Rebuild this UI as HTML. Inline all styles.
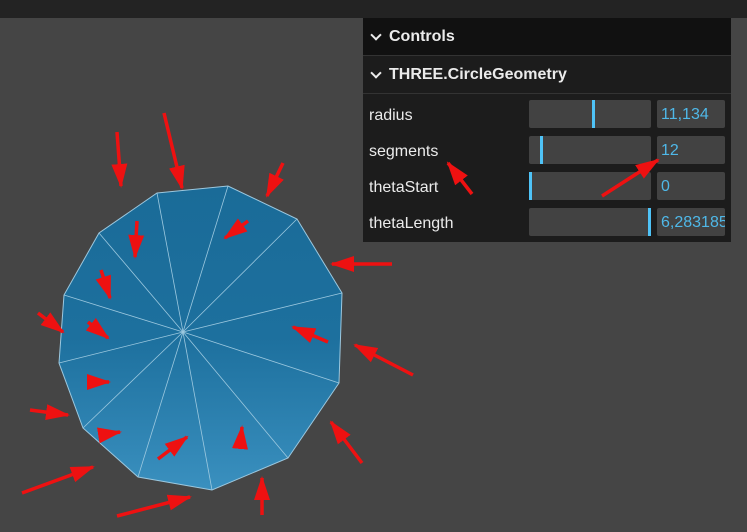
<!DOCTYPE html>
<html><head><style>
body{margin:0;width:747px;height:532px;background:#454545;overflow:hidden;font-family:"Liberation Sans",sans-serif;position:relative}
.top{position:absolute;left:0;top:0;width:747px;height:18px;background:#232323}
.panel{position:absolute;left:363px;top:18px;width:368px;height:224px;background:#1c1c1c;color:#ebebeb;font-size:16px}
.h{height:37px;line-height:38px;font-weight:bold;padding-left:26px;position:relative;border-bottom:1px solid #333;font-size:16px}
.h:before{content:"";position:absolute;left:9px;top:13px;width:6px;height:6px;border-right:2px solid #ebebeb;border-bottom:2px solid #ebebeb;transform:rotate(45deg)}
.row{position:absolute;left:0;height:28px;width:368px}
.row .l{position:absolute;left:6px;top:2px;line-height:28px}
.row .s{position:absolute;left:166px;top:0;width:122px;height:28px;background:#424242;border-radius:2px}
.row .s i{position:absolute;top:0;width:3px;height:28px;background:#4fc3f7}
.row .v{position:absolute;left:294px;top:0;width:68px;height:28px;background:#424242;border-radius:2px;color:#4fb8e8;line-height:30px;padding-left:4px;box-sizing:border-box;overflow:hidden;white-space:nowrap}
</style></head><body>
<div class="top"></div>
<svg style="position:absolute;left:0;top:0" width="747" height="532">
<defs>
<linearGradient id="g" x1="0" y1="0" x2="0" y2="1"><stop offset="0" stop-color="#1a6b98"/><stop offset="0.5" stop-color="#1d709e"/><stop offset="1" stop-color="#3a90bf"/></linearGradient>
</defs>
<polygon points="157,193 228,186 297,219 342,293 339,383 288,458 212,490 138,477 83,428 59,363 64,295 99,233" fill="url(#g)" stroke="#9cc8df" stroke-width="1"/>
<g stroke="#9cc8df" stroke-width="0.8">
<line x1="183" y1="332" x2="157" y2="193"/><line x1="183" y1="332" x2="228" y2="186"/><line x1="183" y1="332" x2="297" y2="219"/><line x1="183" y1="332" x2="342" y2="293"/><line x1="183" y1="332" x2="339" y2="383"/><line x1="183" y1="332" x2="288" y2="458"/><line x1="183" y1="332" x2="212" y2="490"/><line x1="183" y1="332" x2="138" y2="477"/><line x1="183" y1="332" x2="83" y2="428"/><line x1="183" y1="332" x2="59" y2="363"/><line x1="183" y1="332" x2="64" y2="295"/><line x1="183" y1="332" x2="99" y2="233"/>
</g>
</svg>
<div class="panel">
<div class="h" style="background:#111">Controls</div>
<div class="h">THREE.CircleGeometry</div>
<div class="row" style="top:82px"><span class="l">radius</span><div class="s"><i style="left:63px"></i></div><div class="v">11,134</div></div>
<div class="row" style="top:118px"><span class="l">segments</span><div class="s"><i style="left:11px"></i></div><div class="v">12</div></div>
<div class="row" style="top:154px"><span class="l">thetaStart</span><div class="s"><i style="left:0"></i></div><div class="v">0</div></div>
<div class="row" style="top:190px"><span class="l">thetaLength</span><div class="s"><i style="left:119px"></i></div><div class="v">6,283185</div></div>
</div>
<svg style="position:absolute;left:0;top:0" width="747" height="532">
<defs>
<marker id="a" markerWidth="24" markerHeight="18" refX="22" refY="9" orient="auto" markerUnits="userSpaceOnUse"><path d="M0,1L24,9L0,17z" fill="#ee1111"/></marker>
</defs>
<g stroke="#ee1111" stroke-width="3.5" marker-end="url(#a)" fill="none">
<line x1="117" y1="132" x2="121" y2="186"/>
<line x1="164" y1="113" x2="182" y2="188"/>
<line x1="283" y1="163" x2="267" y2="196"/>
<line x1="248" y1="221" x2="225" y2="238"/>
<line x1="137" y1="221" x2="135" y2="257"/>
<line x1="101" y1="270" x2="110" y2="298"/>
<line x1="38" y1="313" x2="63" y2="332"/>
<line x1="88" y1="322" x2="108" y2="338"/>
<line x1="392" y1="264" x2="332" y2="264"/>
<line x1="328" y1="342" x2="293" y2="327"/>
<line x1="413" y1="375" x2="355" y2="345"/>
<line x1="89" y1="382" x2="109" y2="382"/>
<line x1="30" y1="410" x2="68" y2="415"/>
<line x1="101" y1="435" x2="120" y2="432"/>
<line x1="158" y1="459" x2="187" y2="437"/>
<line x1="240" y1="449" x2="242" y2="427"/>
<line x1="362" y1="463" x2="331" y2="422"/>
<line x1="22" y1="493" x2="93" y2="467"/>
<line x1="262" y1="515" x2="262" y2="478"/>
<line x1="117" y1="516" x2="190" y2="497"/>
<line x1="472" y1="194" x2="448" y2="163"/>
<line x1="602" y1="196" x2="658" y2="160"/>
</g>
</svg>
</body></html>
